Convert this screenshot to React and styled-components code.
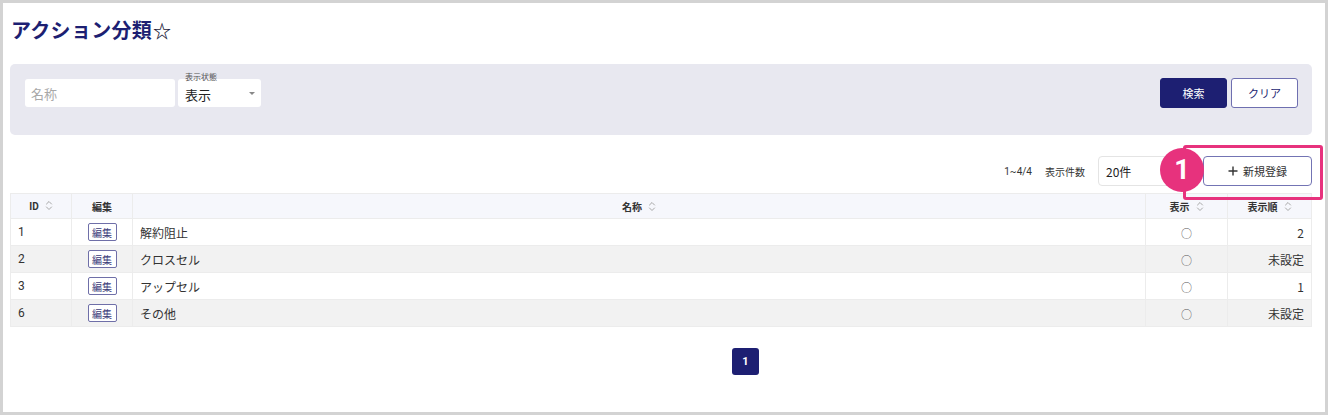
import React from "react";
import styled, { createGlobalStyle } from "styled-components";

const GlobalStyle = createGlobalStyle`
  html, body { margin: 0; padding: 0; background: #ffffff; }
  body { font-family: Roboto, "Noto Sans CJK JP", sans-serif; color: #333; }
  * { box-sizing: border-box; }
`;

const NAVY = "#1d1f72";

const Frame = styled.div`
  width: 1328px;
  height: 415px;
  border: 3px solid #d3d3d3;
  background: #fff;
  padding: 0 13px 0 7px;
`;

const Title = styled.h1`
  margin: 15px 0 22px 1px;
  font-size: 20px;
  line-height: 24px;
  font-weight: 700;
  color: ${NAVY};
  font-family: "Noto Sans CJK JP", sans-serif;
  letter-spacing: 0.3px;
`;

const Star = styled.span`
  font-weight: 700;
  font-size: 18px;
  color: #1a1a3a;
  margin-left: 1px;
`;

const SearchPanel = styled.div`
  height: 71px;
  background: #e8e8f0;
  border-radius: 5px;
  padding: 14px 14px 0 15px;
  display: flex;
  align-items: flex-start;
`;

const TextInput = styled.div`
  width: 150px;
  height: 28px;
  margin-top: 1px;
  background: #fff;
  border-radius: 3px;
  display: flex;
  align-items: center;
  padding-left: 6px;
  font-size: 13px;
  color: #a8a8a8;
  font-family: "Noto Sans CJK JP", sans-serif;
`;

const SelectBox = styled.div`
  position: relative;
  width: 83px;
  height: 28px;
  margin-top: 1px;
  margin-left: 3px;
  background: #fff;
  border-radius: 3px;
  display: flex;
  align-items: center;
  padding-left: 7px;
  padding-top: 3px;
  font-size: 13px;
  color: #222;
  font-family: "Noto Sans CJK JP", sans-serif;
`;

const FloatLabel = styled.span`
  position: absolute;
  left: 7px;
  top: -7px;
  font-size: 8px;
  line-height: 10px;
  color: #555;
`;

const Caret = styled.span`
  position: absolute;
  right: 6px;
  top: 13px;
  width: 0;
  height: 0;
  border-left: 3px solid transparent;
  border-right: 3px solid transparent;
  border-top: 3px solid #888;
`;

const ButtonGroup = styled.div`
  margin-left: auto;
  display: flex;
  gap: 4px;
`;

const Button = styled.button`
  width: 67px;
  height: 30px;
  border-radius: 3px;
  font-size: 11px;
  font-family: "Noto Sans CJK JP", sans-serif;
  cursor: pointer;
  border: 1px solid ${(p) => (p.$primary ? NAVY : "#6e6fb0")};
  background: ${(p) => (p.$primary ? NAVY : "#fff")};
  color: ${(p) => (p.$primary ? "#fff" : NAVY)};
`;

const Toolbar = styled.div`
  margin-top: 21px;
  margin-bottom: 7px;
  height: 30px;
  display: flex;
  align-items: center;
  justify-content: flex-end;
  font-family: "Noto Sans CJK JP", sans-serif;
`;

const Count = styled.span`
  font-size: 10px;
  color: #333;
  font-family: Roboto, sans-serif;
`;

const PerPageLabel = styled.span`
  font-size: 10px;
  color: #333;
  margin-left: 13px;
`;

const PerPage = styled.div`
  width: 94px;
  height: 30px;
  margin-left: 13px;
  border: 1px solid #e4e4e4;
  border-radius: 4px;
  display: flex;
  align-items: center;
  padding-left: 7px;
  font-size: 12px;
  color: #222;
`;

const NewWrap = styled.div`
  position: relative;
  margin-left: 11px;
`;

const NewButton = styled.button`
  width: 109px;
  height: 30px;
  border: 1px solid #7374b4;
  border-radius: 4px;
  background: #fff;
  color: #333;
  font-size: 11px;
  font-family: "Noto Sans CJK JP", sans-serif;
  display: flex;
  align-items: center;
  justify-content: center;
  gap: 5px;
  padding: 0;
`;

const Highlight = styled.div`
  position: absolute;
  left: -20px;
  top: -11px;
  right: -11px;
  bottom: -14px;
  border: 3px solid #e7327d;
  border-radius: 3px;
  pointer-events: none;
`;

const Badge = styled.div`
  position: absolute;
  left: -43px;
  top: -8px;
  width: 44px;
  height: 44px;
  border-radius: 50%;
  background: #e7327d;
  color: #fff;
  font-family: Roboto, sans-serif;
  font-weight: 700;
  font-size: 27px;
  display: flex;
  align-items: center;
  justify-content: center;
`;

const Table = styled.table`
  width: 100%;
  border-collapse: collapse;
  table-layout: fixed;
  font-family: Roboto, "Noto Sans CJK JP", sans-serif;
  border: 1px solid #ececec;
`;

const Th = styled.th`
  height: 25px;
  padding: 0 8px;
  background: #f6f7fc;
  font-size: 10px;
  font-weight: 700;
  color: #333;
  text-align: center;
  border-left: 1px solid #ececec;
  white-space: nowrap;
`;

const Tr = styled.tr`
  background: ${(p) => (p.$striped ? "#f2f2f2" : "#fff")};
`;

const Td = styled.td`
  height: 27px;
  padding: 0 7px;
  font-size: 12px;
  color: #333;
  text-align: ${(p) => p.$align || "left"};
  border-left: 1px solid #ececec;
  border-top: 1px solid #ececec;
  font-family: "Noto Sans CJK JP", sans-serif;
`;

const IdCell = styled(Td)`
  font-family: Roboto, sans-serif;
  font-size: 12px;
`;

const Mark = styled.span`
  font-size: 11px;
  color: #555;
`;

const EditButton = styled.span`
  display: inline-flex;
  align-items: center;
  justify-content: center;
  width: 29px;
  height: 18px;
  border: 1px solid #6f6fa8;
  border-radius: 2px;
  font-size: 10px;
  color: #3c3c7a;
  background: #fff;
`;

const SortIcon = () => (
  <svg width="8" height="11" viewBox="0 0 8 11" style={{ marginLeft: 6, verticalAlign: "-1px" }}>
    <path d="M1.2 4.3 L4 1.5 L6.8 4.3" fill="none" stroke="#a8a8a8" strokeWidth="1" />
    <path d="M1.2 6.7 L4 9.5 L6.8 6.7" fill="none" stroke="#a8a8a8" strokeWidth="1" />
  </svg>
);

const PlusIcon = () => (
  <svg width="10" height="10" viewBox="0 0 10 10">
    <path d="M5 0.5 V9.5 M0.5 5 H9.5" stroke="#333" strokeWidth="1.4" />
  </svg>
);

const Pagination = styled.div`
  margin-top: 21px;
  display: flex;
  justify-content: center;
  padding-left: 169px;
`;

const PageButton = styled.div`
  width: 27px;
  height: 27px;
  border-radius: 3px;
  background: ${NAVY};
  color: #fff;
  font-size: 11px;
  font-weight: 700;
  font-family: Roboto, sans-serif;
  display: flex;
  align-items: center;
  justify-content: center;
`;

const rows = [
  { id: 1, name: "解約阻止", order: "2" },
  { id: 2, name: "クロスセル", order: "未設定" },
  { id: 3, name: "アップセル", order: "1" },
  { id: 6, name: "その他", order: "未設定" },
];

export default function App() {
  return (
    <>
      <GlobalStyle />
      <Frame>
        <Title>
          アクション分類<Star>☆</Star>
        </Title>
        <SearchPanel>
          <TextInput>名称</TextInput>
          <SelectBox>
            <FloatLabel>表示状態</FloatLabel>
            表示
            <Caret />
          </SelectBox>
          <ButtonGroup>
            <Button $primary>検索</Button>
            <Button>クリア</Button>
          </ButtonGroup>
        </SearchPanel>
        <Toolbar>
          <Count>1~4/4</Count>
          <PerPageLabel>表示件数</PerPageLabel>
          <PerPage>20件</PerPage>
          <NewWrap>
            <NewButton>
              <PlusIcon />
              新規登録
            </NewButton>
            <Highlight />
            <Badge>1</Badge>
          </NewWrap>
        </Toolbar>
        <Table>
          <colgroup>
            <col style={{ width: 61 }} />
            <col style={{ width: 61 }} />
            <col />
            <col style={{ width: 82 }} />
            <col style={{ width: 84 }} />
          </colgroup>
          <thead>
            <tr>
              <Th>
                ID<SortIcon />
              </Th>
              <Th>編集</Th>
              <Th>
                名称<SortIcon />
              </Th>
              <Th>
                表示<SortIcon />
              </Th>
              <Th>
                表示順<SortIcon />
              </Th>
            </tr>
          </thead>
          <tbody>
            {rows.map((r, i) => (
              <Tr key={r.id} $striped={i % 2 === 1}>
                <IdCell>{r.id}</IdCell>
                <Td $align="center">
                  <EditButton>編集</EditButton>
                </Td>
                <Td>{r.name}</Td>
                <Td $align="center">
                  <Mark>○</Mark>
                </Td>
                <Td $align="right">{r.order}</Td>
              </Tr>
            ))}
          </tbody>
        </Table>
        <Pagination>
          <PageButton>1</PageButton>
        </Pagination>
      </Frame>
    </>
  );
}
